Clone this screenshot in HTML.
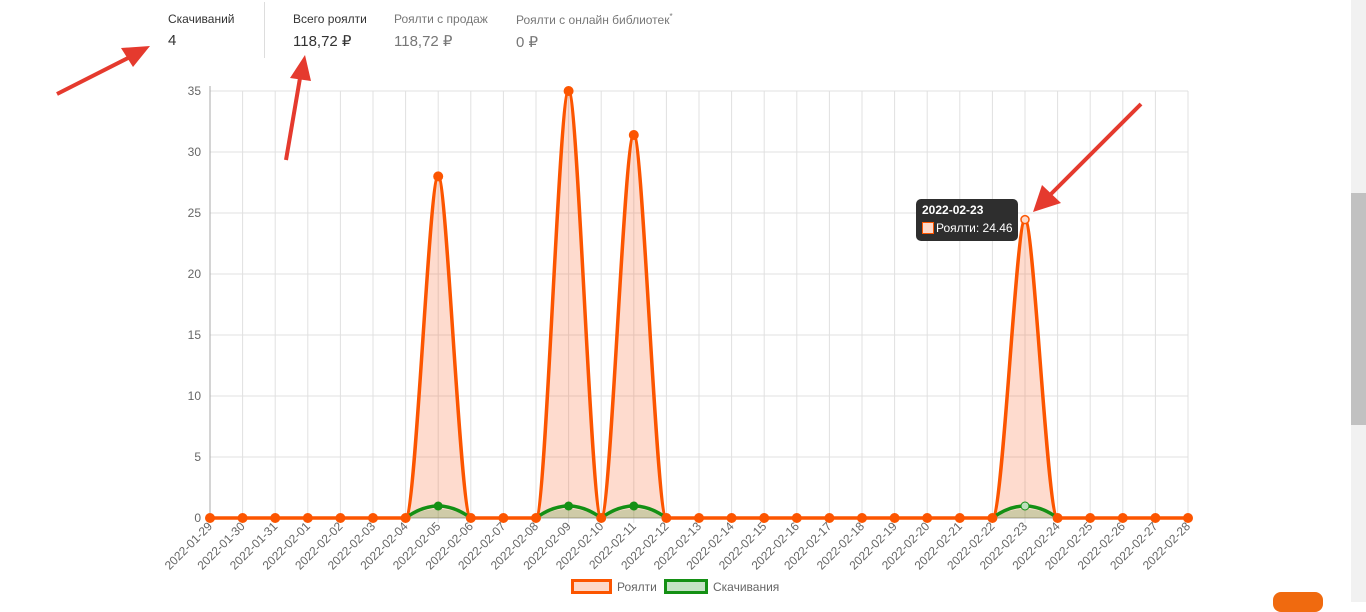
<!DOCTYPE html>
<html><head><meta charset="utf-8"><style>
html,body{margin:0;padding:0;width:1366px;height:602px;overflow:hidden;background:#fff;font-family:"Liberation Sans","Noto Sans CJK SC",sans-serif;}
.st{position:absolute;top:12px;font-size:12px;color:#666}
.st b{display:block;font-weight:normal;font-size:15px;margin-top:6px}
</style></head><body>
<div class="st" style="left:168px;color:#333">Скачиваний<b style="color:#333">4</b></div>
<div style="position:absolute;left:264px;top:2px;width:1px;height:56px;background:#ddd"></div>
<div class="st" style="left:293px;color:#333">Всего роялти<b style="color:#333">118,72 ₽</b></div>
<div class="st" style="left:394px;color:#777">Роялти с продаж<b style="color:#777">118,72 ₽</b></div>
<div class="st" style="left:516px;color:#777">Роялти с онлайн библиотек<sup style="font-size:8px">*</sup><b style="color:#777">0 ₽</b></div>
<div style="position:absolute;left:1351px;top:0;width:15px;height:602px;background:#f1f1f1"></div>
<div style="position:absolute;left:1351px;top:193px;width:15px;height:232px;background:#c1c1c1"></div>
<div style="position:absolute;left:1273px;top:592px;width:50px;height:20px;background:#f06a0f;border-radius:8px"></div>
<svg width="1366" height="602" style="position:absolute;left:0;top:0" font-family="Liberation Sans, sans-serif">
<g stroke="#e0e0e0" stroke-width="1">
<line x1="210" y1="91" x2="1188" y2="91"/><line x1="210" y1="152" x2="1188" y2="152"/><line x1="210" y1="213" x2="1188" y2="213"/><line x1="210" y1="274" x2="1188" y2="274"/><line x1="210" y1="335" x2="1188" y2="335"/><line x1="210" y1="396" x2="1188" y2="396"/><line x1="210" y1="457" x2="1188" y2="457"/>
<line x1="242.6" y1="91" x2="242.6" y2="523"/><line x1="275.2" y1="91" x2="275.2" y2="523"/><line x1="307.8" y1="91" x2="307.8" y2="523"/><line x1="340.4" y1="91" x2="340.4" y2="523"/><line x1="373" y1="91" x2="373" y2="523"/><line x1="405.6" y1="91" x2="405.6" y2="523"/><line x1="438.2" y1="91" x2="438.2" y2="523"/><line x1="470.8" y1="91" x2="470.8" y2="523"/><line x1="503.4" y1="91" x2="503.4" y2="523"/><line x1="536" y1="91" x2="536" y2="523"/><line x1="568.6" y1="91" x2="568.6" y2="523"/><line x1="601.2" y1="91" x2="601.2" y2="523"/><line x1="633.8" y1="91" x2="633.8" y2="523"/><line x1="666.4" y1="91" x2="666.4" y2="523"/><line x1="699" y1="91" x2="699" y2="523"/><line x1="731.6" y1="91" x2="731.6" y2="523"/><line x1="764.2" y1="91" x2="764.2" y2="523"/><line x1="796.8" y1="91" x2="796.8" y2="523"/><line x1="829.4" y1="91" x2="829.4" y2="523"/><line x1="862" y1="91" x2="862" y2="523"/><line x1="894.6" y1="91" x2="894.6" y2="523"/><line x1="927.2" y1="91" x2="927.2" y2="523"/><line x1="959.8" y1="91" x2="959.8" y2="523"/><line x1="992.4" y1="91" x2="992.4" y2="523"/><line x1="1025" y1="91" x2="1025" y2="523"/><line x1="1057.6" y1="91" x2="1057.6" y2="523"/><line x1="1090.2" y1="91" x2="1090.2" y2="523"/><line x1="1122.8" y1="91" x2="1122.8" y2="523"/><line x1="1155.4" y1="91" x2="1155.4" y2="523"/><line x1="1188" y1="91" x2="1188" y2="523"/>
</g>
<line x1="210" y1="86" x2="210" y2="523" stroke="#aaa"/>
<line x1="205" y1="518" x2="1188" y2="518" stroke="#aaa"/>
<g font-size="12" fill="#666" text-anchor="end">
<text x="201" y="95">35</text><text x="201" y="156">30</text><text x="201" y="217">25</text><text x="201" y="278">20</text><text x="201" y="339">15</text><text x="201" y="400">10</text><text x="201" y="461">5</text><text x="201" y="522">0</text>
</g>
<g fill="rgba(250,90,30,0.22)" stroke="none">
<path d="M405.6,518 C416,518 429,176.4 438.2,176.4 C447,176.4 460,518 470.8,518Z"/>
<path d="M536,518 C546,518 559,91 568.6,91 C578,91 591,518 601.2,518Z"/>
<path d="M601.2,518 C611,518 624,135 633.8,135 C643,135 656,518 666.4,518Z"/>
<path d="M992.4,518 C1003,518 1016,219.6 1025,219.6 C1034,219.6 1047,518 1057.6,518Z"/>
</g>
<g fill="rgba(20,140,20,0.2)">
<path d="M405.6,518 Q438.2,500 470.8,518Z"/><path d="M536,518 Q568.6,500 601.2,518Z"/><path d="M601.2,518 Q633.8,500 666.4,518Z"/><path d="M992.4,518 Q1025,500 1057.6,518Z"/>
</g>
<path d="M210,518 L405.6,518 C416,518 429,176.4 438.2,176.4 C447,176.4 460,518 470.8,518 L536,518 C546,518 559,91 568.6,91 C578,91 591,518 601.2,518 C611,518 624,135 633.8,135 C643,135 656,518 666.4,518 L992.4,518 C1003,518 1016,219.6 1025,219.6 C1034,219.6 1047,518 1057.6,518 L1188,518" fill="none" stroke="#fc5500" stroke-width="3.5"/>
<g fill="none" stroke="#149014" stroke-width="3.5">
<path d="M405.6,518 Q438.2,494 470.8,518"/><path d="M536,518 Q568.6,494 601.2,518"/><path d="M601.2,518 Q633.8,494 666.4,518"/><path d="M992.4,518 Q1025,494 1057.6,518"/>
</g>
<g fill="#149014"><circle cx="438.2" cy="506" r="4.5"/><circle cx="568.6" cy="506" r="4.5"/><circle cx="633.8" cy="506" r="4.5"/><circle cx="1025" cy="506" r="4" fill="#bde0bd" stroke="#149014"/></g>
<g fill="#fc5500">
<circle cx="210" cy="518" r="5"/><circle cx="242.6" cy="518" r="5"/><circle cx="275.2" cy="518" r="5"/><circle cx="307.8" cy="518" r="5"/><circle cx="340.4" cy="518" r="5"/><circle cx="373" cy="518" r="5"/><circle cx="405.6" cy="518" r="5"/><circle cx="438.2" cy="176.4" r="5"/><circle cx="470.8" cy="518" r="5"/><circle cx="503.4" cy="518" r="5"/><circle cx="536" cy="518" r="5"/><circle cx="568.6" cy="91" r="5"/><circle cx="601.2" cy="518" r="5"/><circle cx="633.8" cy="135" r="5"/><circle cx="666.4" cy="518" r="5"/><circle cx="699" cy="518" r="5"/><circle cx="731.6" cy="518" r="5"/><circle cx="764.2" cy="518" r="5"/><circle cx="796.8" cy="518" r="5"/><circle cx="829.4" cy="518" r="5"/><circle cx="862" cy="518" r="5"/><circle cx="894.6" cy="518" r="5"/><circle cx="927.2" cy="518" r="5"/><circle cx="959.8" cy="518" r="5"/><circle cx="992.4" cy="518" r="5"/><circle cx="1057.6" cy="518" r="5"/><circle cx="1090.2" cy="518" r="5"/><circle cx="1122.8" cy="518" r="5"/><circle cx="1155.4" cy="518" r="5"/><circle cx="1188" cy="518" r="5"/>
<circle cx="1025" cy="219.6" r="4" fill="#fdd9c9" stroke="#fc5500" stroke-width="1.5"/>
</g>
<g font-size="12" fill="#666" text-anchor="end">
<text transform="translate(213,527) rotate(-45)">2022-01-29</text><text transform="translate(245.6,527) rotate(-45)">2022-01-30</text><text transform="translate(278.2,527) rotate(-45)">2022-01-31</text><text transform="translate(310.8,527) rotate(-45)">2022-02-01</text><text transform="translate(343.4,527) rotate(-45)">2022-02-02</text><text transform="translate(376,527) rotate(-45)">2022-02-03</text><text transform="translate(408.6,527) rotate(-45)">2022-02-04</text><text transform="translate(441.2,527) rotate(-45)">2022-02-05</text><text transform="translate(473.8,527) rotate(-45)">2022-02-06</text><text transform="translate(506.4,527) rotate(-45)">2022-02-07</text><text transform="translate(539,527) rotate(-45)">2022-02-08</text><text transform="translate(571.6,527) rotate(-45)">2022-02-09</text><text transform="translate(604.2,527) rotate(-45)">2022-02-10</text><text transform="translate(636.8,527) rotate(-45)">2022-02-11</text><text transform="translate(669.4,527) rotate(-45)">2022-02-12</text><text transform="translate(702,527) rotate(-45)">2022-02-13</text><text transform="translate(734.6,527) rotate(-45)">2022-02-14</text><text transform="translate(767.2,527) rotate(-45)">2022-02-15</text><text transform="translate(799.8,527) rotate(-45)">2022-02-16</text><text transform="translate(832.4,527) rotate(-45)">2022-02-17</text><text transform="translate(865,527) rotate(-45)">2022-02-18</text><text transform="translate(897.6,527) rotate(-45)">2022-02-19</text><text transform="translate(930.2,527) rotate(-45)">2022-02-20</text><text transform="translate(962.8,527) rotate(-45)">2022-02-21</text><text transform="translate(995.4,527) rotate(-45)">2022-02-22</text><text transform="translate(1028,527) rotate(-45)">2022-02-23</text><text transform="translate(1060.6,527) rotate(-45)">2022-02-24</text><text transform="translate(1093.2,527) rotate(-45)">2022-02-25</text><text transform="translate(1125.8,527) rotate(-45)">2022-02-26</text><text transform="translate(1158.4,527) rotate(-45)">2022-02-27</text><text transform="translate(1191,527) rotate(-45)">2022-02-28</text>
</g>
<rect x="572.5" y="580.5" width="38" height="12" fill="#fdd9c9" stroke="#fc5500" stroke-width="3"/>
<text x="617" y="591" font-size="12" fill="#666">Роялти</text>
<rect x="665.5" y="580.5" width="41" height="12" fill="#c5e3c5" stroke="#149014" stroke-width="3"/>
<text x="713" y="591" font-size="12" fill="#666">Скачивания</text>
<rect x="916" y="199" width="102" height="42" rx="5" fill="#2e2e2e"/>
<text x="922" y="214" font-size="12" font-weight="bold" fill="#fff">2022-02-23</text>
<rect x="922.5" y="222.5" width="11" height="11" fill="#fdd9c9" stroke="#fc5500"/>
<text x="936" y="232" font-size="12" fill="#fff">Роялти: 24.46</text>
<g stroke="#e53a2e" stroke-width="4" fill="#e53a2e">
<line x1="57" y1="94" x2="130" y2="57"/><polygon points="150,46 121,48 133,67" stroke="none"/>
<line x1="286" y1="160" x2="300" y2="78"/><polygon points="305,55 290,78 311,81" stroke="none"/>
<line x1="1141" y1="104" x2="1050" y2="195"/><polygon points="1033,212 1042,185 1061,203" stroke="none"/>
</g>
</svg>
</body></html>
